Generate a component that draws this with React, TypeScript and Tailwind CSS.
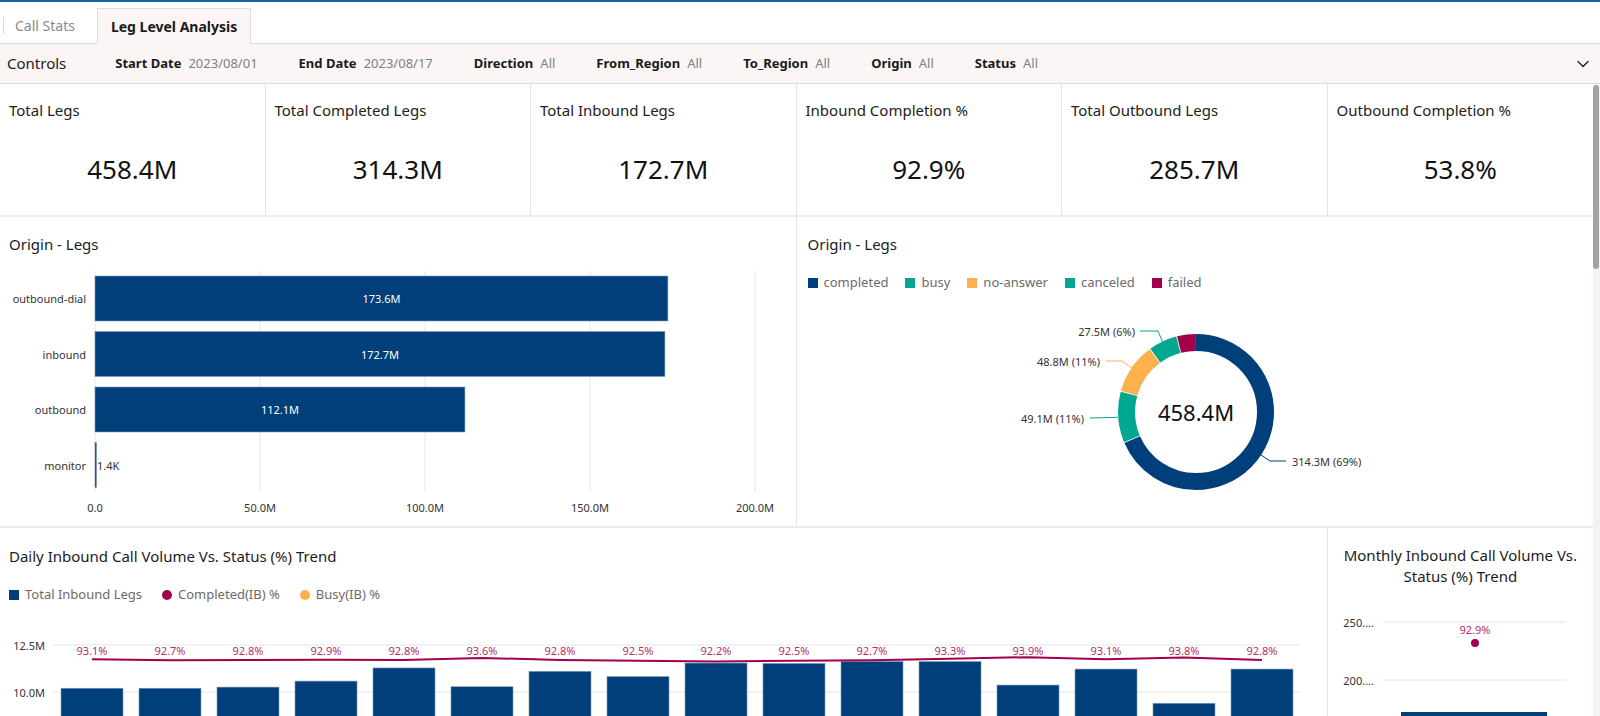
import React from 'react'
import { ChevronDown } from 'lucide-react'

const NAVY = '#003f7a'
const TEAL = '#00a88f'
const ORANGE = '#fdb14d'
const CRIMSON = '#a2004b'

const filters = [
    ['Start Date', '2023/08/01'],
    ['End Date', '2023/08/17'],
    ['Direction', 'All'],
    ['From_Region', 'All'],
    ['To_Region', 'All'],
    ['Origin', 'All'],
    ['Status', 'All'],
]

const kpis = [
    { label: 'Total Legs', value: '458.4M' },
    { label: 'Total Completed Legs', value: '314.3M' },
    { label: 'Total Inbound Legs', value: '172.7M' },
    { label: 'Inbound Completion %', value: '92.9%' },
    { label: 'Total Outbound Legs', value: '285.7M' },
    { label: 'Outbound Completion %', value: '53.8%' },
]

const origins = [
    { name: 'outbound-dial', value: 173.6, label: '173.6M' },
    { name: 'inbound', value: 172.7, label: '172.7M' },
    { name: 'outbound', value: 112.1, label: '112.1M' },
    { name: 'monitor', value: 0, label: '1.4K' },
]

const statuses = [
    { name: 'completed', value: 314.3, color: NAVY },
    { name: 'busy', value: 49.1, color: TEAL },
    { name: 'no-answer', value: 48.8, color: ORANGE },
    { name: 'canceled', value: 27.5, color: TEAL },
    { name: 'failed', value: 18.7, color: CRIMSON },
]

const daily = [
    { v: 10.2, p: 93.1 }, { v: 10.2, p: 92.7 }, { v: 10.26, p: 92.8 }, { v: 10.58, p: 92.9 },
    { v: 11.28, p: 92.8 }, { v: 10.28, p: 93.6 }, { v: 11.1, p: 92.8 }, { v: 10.82, p: 92.5 },
    { v: 11.54, p: 92.2 }, { v: 11.52, p: 92.5 }, { v: 11.62, p: 92.7 }, { v: 11.62, p: 93.3 },
    { v: 10.37, p: 93.9 }, { v: 11.22, p: 93.1 }, { v: 9.4, p: 93.8 }, { v: 11.22, p: 92.8 },
]

// horizontal bar chart: 0 at x=95, 3.3px per million
const OriginBars = () => {
    const x0 = 95
    const k = 3.3
    return (
        <svg width="796" height="272" className="block">
            {[0, 50, 100, 150, 200].map((t) => (
                <g key={t}>
                    <line x1={x0 + t * k} x2={x0 + t * k} y1={16} y2={237} stroke="#e6e6e6" />
                    <text x={x0 + t * k} y={252} textAnchor="middle" dominantBaseline="central" fontSize="11" fill="#333">
                        {t === 0 ? '0.0' : `${t}.0M`}
                    </text>
                </g>
            ))}
            {origins.map((o, i) => {
                const y = 21 + i * 55.5
                const w = Math.max(o.value * k, 1.5)
                return (
                    <g key={o.name}>
                        <text x={86} y={y + 22.5} textAnchor="end" dominantBaseline="central" fontSize="11" fill="#333">
                            {o.name}
                        </text>
                        <rect x={x0} y={y} width={w} height={45} fill={NAVY} stroke="#7c9cc0" strokeWidth="0.6" />
                        {o.value > 0 ? (
                            <text x={x0 + w / 2} y={y + 22.5} textAnchor="middle" dominantBaseline="central" fontSize="11" fill="#fff">
                                {o.label}
                            </text>
                        ) : (
                            <text x={x0 + 2} y={y + 22.5} dominantBaseline="central" fontSize="11" fill="#333">
                                {o.label}
                            </text>
                        )}
                    </g>
                )
            })}
        </svg>
    )
}

const StatusDonut = () => {
    const cx = 399
    const cy = 119
    const r = 69.5
    const C = 2 * Math.PI * r
    const total = statuses.reduce((s, x) => s + x.value, 0)
    let acc = 0
    return (
        <svg width="796" height="234" className="block">
            <g transform={`rotate(-90 ${cx} ${cy})`}>
                {statuses.map((s) => {
                    const len = (s.value / total) * C
                    const el = (
                        <circle
                            key={s.name}
                            cx={cx}
                            cy={cy}
                            r={r}
                            fill="none"
                            stroke={s.color}
                            strokeWidth="17"
                            strokeDasharray={`${len - 0.8} ${C - len + 0.8}`}
                            strokeDashoffset={-acc}
                        />
                    )
                    acc += len
                    return el
                })}
            </g>
            <text x={cx} y={cy} textAnchor="middle" dominantBaseline="central" fontSize="22" fill="#111">
                458.4M
            </text>
            <polyline points="343,38 361,38 365.4,48.6" fill="none" stroke={TEAL} strokeWidth="1" />
            <text x={338} y={38} textAnchor="end" dominantBaseline="central" fontSize="11" fill="#333">27.5M (6%)</text>
            <polyline points="309,68 325,68 334.7,74.8" fill="none" stroke={ORANGE} strokeWidth="1" />
            <text x={303} y={68} textAnchor="end" dominantBaseline="central" fontSize="11" fill="#333">48.8M (11%)</text>
            <polyline points="293,125 321,124.3" fill="none" stroke={TEAL} strokeWidth="1" />
            <text x={287} y={125} textAnchor="end" dominantBaseline="central" fontSize="11" fill="#333">49.1M (11%)</text>
            <polyline points="464,162 473,168 489,168" fill="none" stroke={NAVY} strokeWidth="1" />
            <text x={495} y={168} dominantBaseline="central" fontSize="11" fill="#333">314.3M (69%)</text>
        </svg>
    )
}

// daily combo chart: 10.0M gridline at y=87, 18.8px per million, bands of 78px from x=53
const DailyChart = () => {
    const base = 87
    const k = 18.8
    const band = 78
    const pts = daily.map((d, i) => `${92 + i * band},${55 - (d.p - 92.8) * 2.6}`).join(' ')
    return (
        <svg width="1328" height="260" className="block">
            {[
                { y: 40, t: '12.5M' },
                { y: 87, t: '10.0M' },
            ].map((g) => (
                <g key={g.t}>
                    <line x1={53} x2={1300} y1={g.y} y2={g.y} stroke="#e6e6e6" />
                    <text x={45} y={g.y} textAnchor="end" dominantBaseline="central" fontSize="11" fill="#333">{g.t}</text>
                </g>
            ))}
            {daily.map((d, i) => {
                const top = base - (d.v - 10) * k
                return (
                    <rect key={i} x={61 + i * band} y={top} width={62} height={260 - top} fill={NAVY} stroke="#7c9cc0" strokeWidth="0.6" />
                )
            })}
            <polyline points={pts} fill="none" stroke={CRIMSON} strokeWidth="2" strokeLinejoin="round" />
            {daily.map((d, i) => (
                <text key={i} x={92 + i * band} y={45} textAnchor="middle" dominantBaseline="central" fontSize="11" fill="#b3306c">
                    {d.p.toFixed(1)}%
                </text>
            ))}
        </svg>
    )
}

const MonthlyChart = () => (
    <svg width="264" height="160" className="block">
        <line x1={55} x2={238} y1={35} y2={35} stroke="#e6e6e6" />
        <line x1={55} x2={238} y1={93} y2={93} stroke="#e6e6e6" />
        <text x={46} y={35} textAnchor="end" dominantBaseline="central" fontSize="11" fill="#333">250....</text>
        <text x={46} y={93} textAnchor="end" dominantBaseline="central" fontSize="11" fill="#333">200....</text>
        <rect x={73} y={125} width={146} height={40} fill={NAVY} />
        <text x={147} y={42} textAnchor="middle" dominantBaseline="central" fontSize="11" fill="#b3306c">92.9%</text>
        <circle cx={147} cy={56} r={4} fill={CRIMSON} />
    </svg>
)

const LegendItem = ({ color, label, round }: { color: string; label: string; round?: boolean }) => (
    <div className="flex items-center gap-[6px]">
        <span
            className={`inline-block w-[10px] h-[10px] ${round ? 'rounded-full' : ''}`}
            style={{ backgroundColor: color }}
        />
        <span className="text-[13px] text-[#6b6b6b]">{label}</span>
    </div>
)

export default function App() {
    return (
        <div className="h-[716px] w-full overflow-hidden bg-white flex flex-col font-['Noto_Sans',sans-serif] text-[#1c1c24]">
            <div className="h-[2px] bg-[#17659a] shrink-0" />

            {/* Tabs */}
            <div className="h-[41px] flex items-end shrink-0">
                <div className="h-[36px] flex items-center">
                    <span className="ml-[3px] w-px h-[17px] bg-[#dcdcdc]" />
                    <span className="pl-[11px] pr-[22px] text-[14px] text-[#8a8a8a]">Call Stats</span>
                </div>
                <div className="h-[36px] -mb-px relative z-10 flex items-center px-[13px] bg-[#fbf5f5] border border-b-0 border-[#dcdcdc] text-[14px] font-bold text-[#1a1a1a]">
                    Leg Level Analysis
                </div>
            </div>

            {/* Controls */}
            <div className="h-[41px] shrink-0 flex items-center bg-[#fbf5f5] border-y border-[#dedada] pl-[7px] pr-[7px]">
                <span className="text-[15px] text-[#222]">Controls</span>
                <div className="flex items-center gap-[41px] ml-[49px]">
                    {filters.map(([label, value]) => (
                        <div key={label} className="flex items-center gap-[7px] text-[13px]">
                            <span className="font-bold text-[#1a1a1a]">{label}</span>
                            <span className="text-[#808080]">{value}</span>
                        </div>
                    ))}
                </div>
                <ChevronDown className="ml-auto text-[#222]" size={20} strokeWidth={1.6} />
            </div>

            <div className="flex flex-1 min-h-0">
                <div className="flex-1 min-w-0 overflow-hidden flex flex-col">
                    {/* KPI row */}
                    <div className="grid grid-cols-6 h-[133px] shrink-0 border-b-2 border-[#ececec]">
                        {kpis.map((k, i) => (
                            <div key={k.label} className={`flex flex-col pt-[16px] pl-[9px] ${i < 5 ? 'border-r border-[#e4e4e4]' : ''}`}>
                                <div className="text-[15px] leading-[20px] text-[#222]">{k.label}</div>
                                <div className="mt-[32px] text-center pr-[9px] text-[26px] leading-[34px] text-[#111]">{k.value}</div>
                            </div>
                        ))}
                    </div>

                    {/* Origin row */}
                    <div className="flex h-[311px] shrink-0 border-b-2 border-[#ececec]">
                        <div className="w-1/2 border-r border-[#e4e4e4] flex flex-col">
                            <div className="pt-[16px] pl-[9px] text-[15px] leading-[22px]">Origin - Legs</div>
                            <OriginBars />
                        </div>
                        <div className="w-1/2 flex flex-col">
                            <div className="pt-[16px] pl-[11px] text-[15px] leading-[22px]">Origin - Legs</div>
                            <div className="mt-[18px] h-[20px] pl-[11px] flex items-center gap-[17px]">
                                {statuses.map((s) => (
                                    <LegendItem key={s.name} color={s.color} label={s.name} />
                                ))}
                            </div>
                            <StatusDonut />
                        </div>
                    </div>

                    {/* Trend row */}
                    <div className="flex flex-1">
                        <div className="flex-[5] min-w-0 border-r border-[#e4e4e4] flex flex-col">
                            <div className="pt-[17px] pl-[9px] text-[15px] leading-[22px]">
                                Daily Inbound Call Volume Vs. Status (%) Trend
                            </div>
                            <div className="mt-[18px] h-[20px] pl-[9px] flex items-center gap-[20px]">
                                <LegendItem color={NAVY} label="Total Inbound Legs" />
                                <LegendItem color={CRIMSON} label="Completed(IB) %" round />
                                <LegendItem color={ORANGE} label="Busy(IB) %" round />
                            </div>
                            <DailyChart />
                        </div>
                        <div className="flex-[1] min-w-0 flex flex-col">
                            <div className="pt-[17px] px-[8px] text-center text-[15px] leading-[21px]">
                                Monthly Inbound Call Volume Vs.
                                <br />
                                Status (%) Trend
                            </div>
                            <MonthlyChart />
                        </div>
                    </div>
                </div>

                {/* scrollbar */}
                <div className="w-[7px] shrink-0 bg-[#f7f2f2] pt-px">
                    <div className="h-[184px] w-[6px] rounded-full bg-[#a3a3a3]" />
                </div>
            </div>
        </div>
    )
}
